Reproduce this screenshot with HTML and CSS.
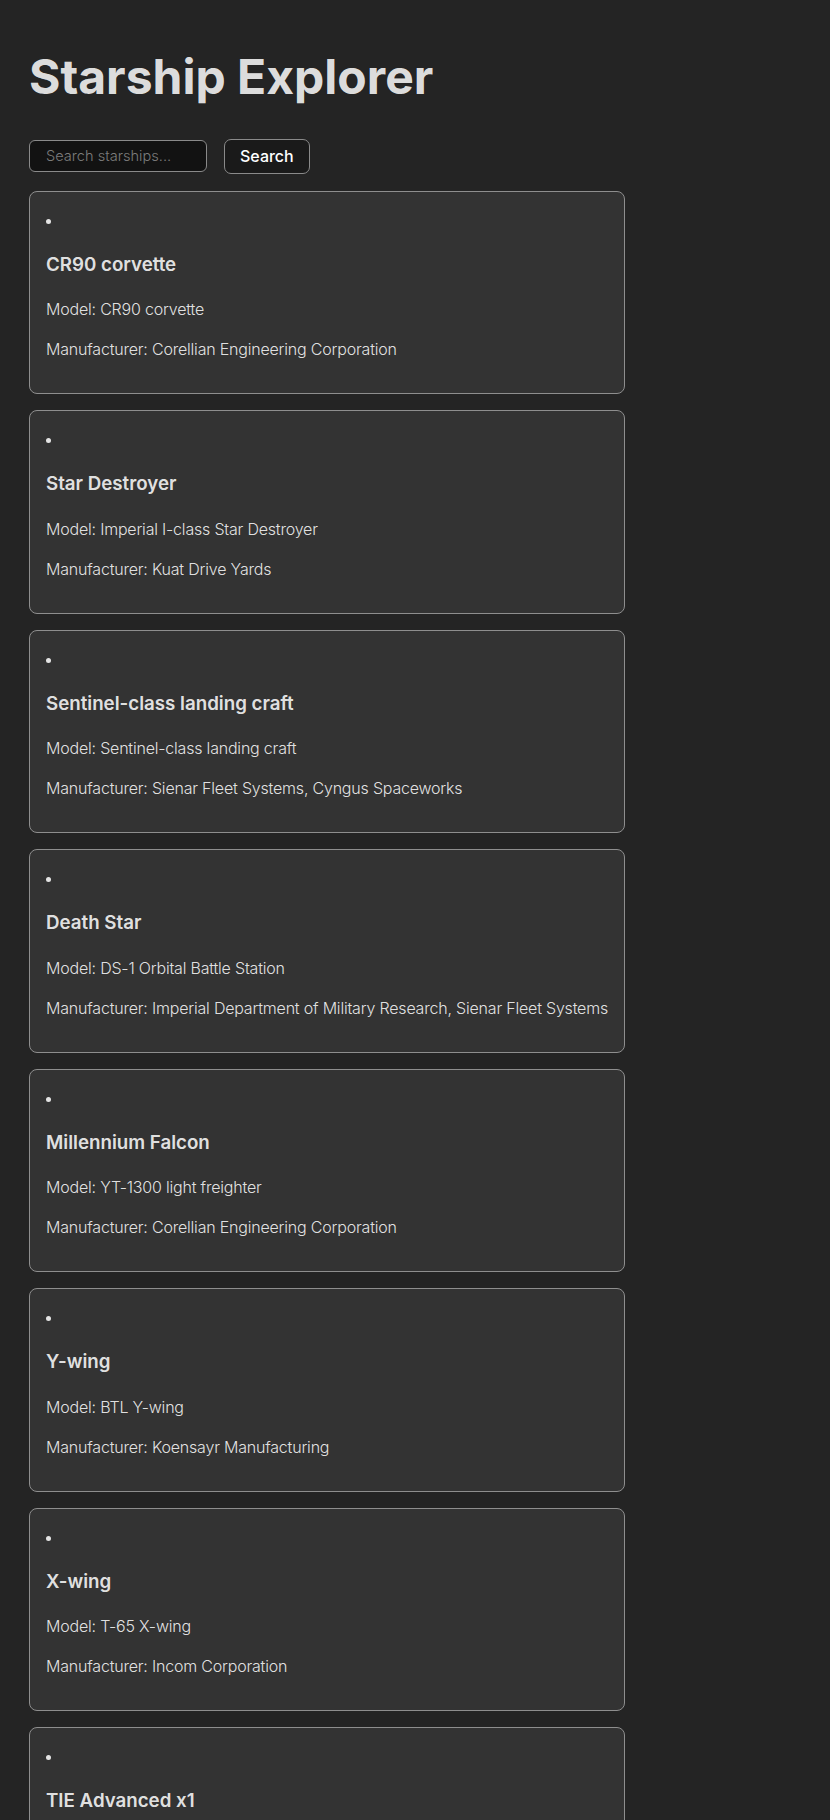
FILE: index.html
```html
<!DOCTYPE html>
<html lang="en">
<head>
<meta charset="utf-8">
<title>Starship Explorer</title>
<link rel="stylesheet" href="styles.css">
</head>
<body>
<div class="app">
  <h1 class="title">Starship Explorer</h1>
  <div class="search-row">
    <input class="search-input" type="text" placeholder="Search starships...">
    <button class="search-btn" type="button">Search</button>
  </div>
  <ul class="ship-list">
    <li class="ship-card">
      <h3 class="ship-name">CR90 corvette</h3>
      <p class="ship-info">Model: CR90 corvette</p>
      <p class="ship-info">Manufacturer: Corellian Engineering Corporation</p>
    </li>
    <li class="ship-card">
      <h3 class="ship-name">Star Destroyer</h3>
      <p class="ship-info">Model: Imperial I-class Star Destroyer</p>
      <p class="ship-info">Manufacturer: Kuat Drive Yards</p>
    </li>
    <li class="ship-card">
      <h3 class="ship-name">Sentinel-class landing craft</h3>
      <p class="ship-info">Model: Sentinel-class landing craft</p>
      <p class="ship-info">Manufacturer: Sienar Fleet Systems, Cyngus Spaceworks</p>
    </li>
    <li class="ship-card">
      <h3 class="ship-name">Death Star</h3>
      <p class="ship-info">Model: DS-1 Orbital Battle Station</p>
      <p class="ship-info">Manufacturer: Imperial Department of Military Research, Sienar Fleet Systems</p>
    </li>
    <li class="ship-card">
      <h3 class="ship-name">Millennium Falcon</h3>
      <p class="ship-info">Model: YT-1300 light freighter</p>
      <p class="ship-info">Manufacturer: Corellian Engineering Corporation</p>
    </li>
    <li class="ship-card">
      <h3 class="ship-name">Y-wing</h3>
      <p class="ship-info">Model: BTL Y-wing</p>
      <p class="ship-info">Manufacturer: Koensayr Manufacturing</p>
    </li>
    <li class="ship-card">
      <h3 class="ship-name">X-wing</h3>
      <p class="ship-info">Model: T-65 X-wing</p>
      <p class="ship-info">Manufacturer: Incom Corporation</p>
    </li>
    <li class="ship-card">
      <h3 class="ship-name">TIE Advanced x1</h3>
      <p class="ship-info">Model: Twin Ion Engine Advanced x1</p>
      <p class="ship-info">Manufacturer: Sienar Fleet Systems</p>
    </li>
    <li class="ship-card">
      <h3 class="ship-name">Executor</h3>
      <p class="ship-info">Model: Executor-class star dreadnought</p>
      <p class="ship-info">Manufacturer: Kuat Drive Yards, Fondor Shipyards</p>
    </li>
    <li class="ship-card">
      <h3 class="ship-name">Rebel transport</h3>
      <p class="ship-info">Model: GR-75 medium transport</p>
      <p class="ship-info">Manufacturer: Gallofree Yards, Inc.</p>
    </li>
  </ul>
</div>
</body>
</html>
```
FILE: styles.css
```css
html, body {
  margin: 0;
  padding: 0;
  background: #242424;
}

body {
  font-family: Inter, "Noto Sans", "Liberation Sans", sans-serif;
  font-size: 16px;
  line-height: 1.5;
  color: rgba(255, 255, 255, 0.87);
}

.app {
  padding: 51px 29px 40px;
}

.title {
  margin: 0 0 35px;
  font-size: 48px;
  line-height: 1.1;
  font-weight: 700;
  color: rgba(255, 255, 255, 0.87);
}

.search-row {
  display: flex;
  align-items: center;
  gap: 17px;
  margin-bottom: 17px;
}

.search-input {
  box-sizing: border-box;
  width: 178px;
  height: 32px;
  padding: 0 16px;
  font-family: Inter, "Noto Sans", sans-serif;
  font-size: 14.6px;
  font-weight: 300;
  color: rgba(255, 255, 255, 0.87);
  background: #121212;
  border: 1px solid #8a8a8a;
  border-radius: 6px;
  outline: none;
}

.search-input::placeholder {
  color: #7b7b7b;
}

.search-btn {
  box-sizing: border-box;
  height: 35px;
  padding: 0 15px;
  font-family: Inter, "Noto Sans", sans-serif;
  font-size: 16px;
  font-weight: 500;
  color: #ffffff;
  background: #1a1a1a;
  border: 1px solid #8a8a8a;
  border-radius: 7px;
  cursor: pointer;
}

.ship-list {
  margin: 0;
  padding: 0;
}

.ship-card {
  box-sizing: border-box;
  width: 596px;
  margin: 0 0 16px;
  padding: 16px;
  list-style: disc inside;
  background: #333333;
  border: 1px solid #8e8e8e;
  border-radius: 8px;
}

.ship-name {
  margin: 18.72px 0;
  font-size: 18.72px;
  font-weight: 600;
}

.ship-info {
  margin: 16px 0;
  font-weight: 300;
  letter-spacing: -0.2px;
  white-space: nowrap;
}
```
